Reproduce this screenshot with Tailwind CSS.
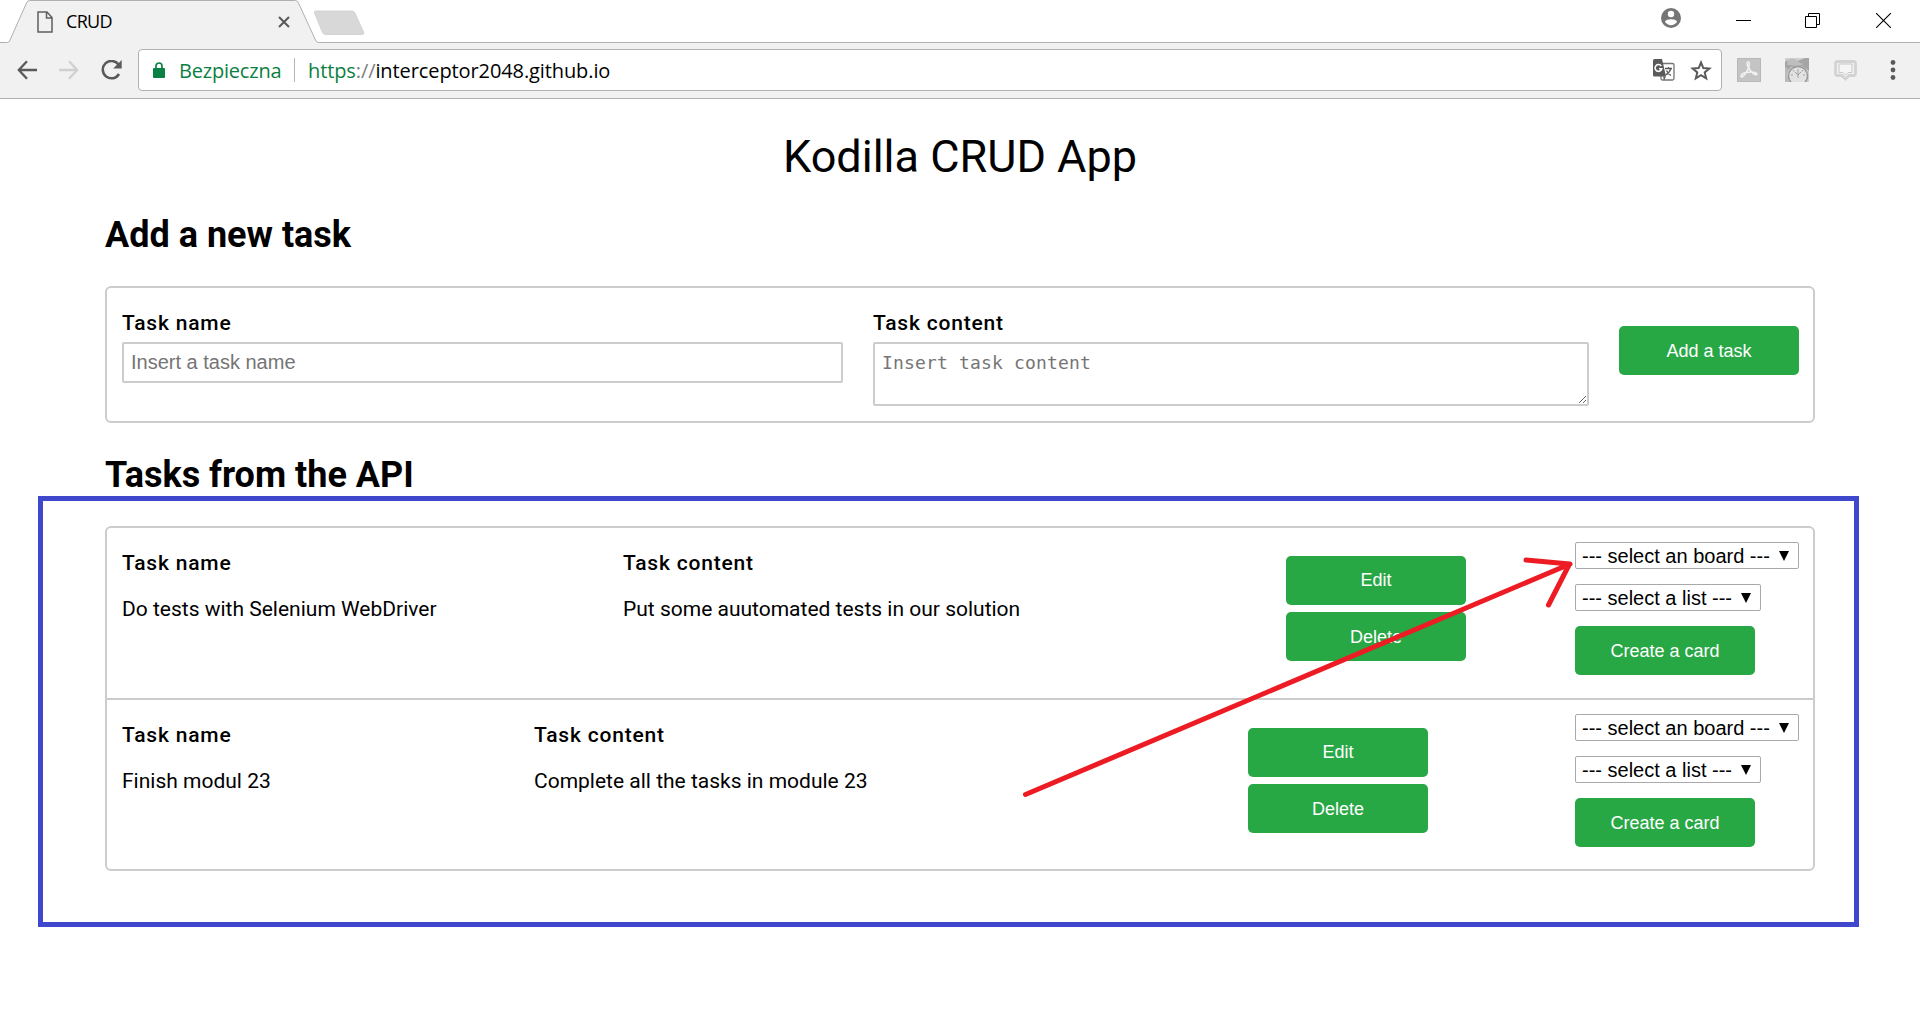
<!DOCTYPE html>
<html lang="pl">
<head>
<meta charset="utf-8">
<title>CRUD</title>
<script src="https://cdn.jsdelivr.net/npm/@tailwindcss/browser@4"></script>
</head>
<body class="relative h-[1020px] w-[1920px] overflow-hidden bg-white font-[Roboto,sans-serif] text-black">

<!-- Tab strip -->
<header class="font-['Open_Sans',sans-serif]">
  <div class="relative flex h-[43px] items-start">
    <svg class="absolute inset-0" width="1920" height="43" viewBox="0 0 1920 43" fill="none">
      <path d="M0 42.5H7.5Q9 42.5 10 40L26.500 3Q27.500 .5 29.500 .5H295.500Q297.500 .5 298.500 3L315.500 40Q316.500 42.500 318.500 42.500H1920V43H0Z" fill="#f1f1f1"/>
      <path d="M0 42.500H7.500Q9 42.500 10 40L26.500 3Q27.500 .5 29.500 .5H295.500Q297.500 .5 298.500 3L315.500 40Q316.500 42.500 318.500 42.500H1920" stroke="#b0b0b0"/>
      <path d="M316 11H352Q354 11 355 13L363.500 32Q364.500 34.500 362.500 34.500H326Q323.500 34.500 322.500 32.500L314.500 13Q313.500 11 316 11Z" fill="#d8d8d8" stroke="#cdcdcd" stroke-width=".8"/>
    </svg>
    <div class="relative ml-[37px] flex h-[43px] w-[253px] items-center">
      <svg width="16" height="22" viewBox="0 0 16 22" fill="none" stroke="#5f5f5f" stroke-width="1.500"><path d="M1 1H10L15 6.500V21H1ZM9.500 1V7H15"/></svg>
      <span class="ml-[13px] flex-1 pb-px text-[18px] leading-6 tracking-[-0.7px]">CRUD</span>
      <svg width="12" height="12" viewBox="0 0 12 12" stroke="#5a5a5a" stroke-width="2"><path d="M1 1L11 11M11 1L1 11"/></svg>
    </div>
    <div class="relative ml-auto flex h-[43px] items-start">
      <svg class="mt-2" width="20" height="20" viewBox="0 0 20 20"><circle cx="10" cy="10" r="10" fill="#757575"/><circle cx="10" cy="6" r="3.200" fill="#fff"/><path d="M4 14C4 11.800 8 11.200 10 11.200S16 11.800 16 14C14.500 16 12.500 17.200 10 17.200S5.500 16 4 14Z" fill="#fff"/></svg>
      <svg class="ml-[55px] mt-[13px]" width="15" height="15" viewBox="0 0 15 15" stroke="#000"><path d="M0 7.500H15"/></svg>
      <svg class="ml-[54px] mt-[13px]" width="15" height="15" viewBox="0 0 15 15" fill="none" stroke="#000"><path d="M.5 3.500H11.500V14.500H.5ZM3.500 3.500V.5H14.500V11.500H11.500"/></svg>
      <svg class="ml-[56px] mr-[29px] mt-[13px]" width="15" height="15" viewBox="0 0 15 15" stroke="#000" stroke-width="1.100"><path d="M0 0L15 15M15 0L0 15"/></svg>
    </div>
  </div>

  <!-- Toolbar -->
  <div class="flex h-14 items-start border-b border-[#b0b0b0] bg-[#f1f1f1] pt-[6px]">
    <div class="flex h-[41px] items-center pl-[17px]">
      <svg width="20" height="20" viewBox="0 0 20 20" fill="none" stroke="#5a5a5a" stroke-width="2.300"><path d="M20 10H2M10 1.200L1.800 10L10 18.800"/></svg>
      <svg class="ml-[22px]" width="20" height="20" viewBox="0 0 20 20" fill="none" stroke="#d0d0d0" stroke-width="2.300"><path d="M0 10H18M10 1.200L18.200 10L10 18.800"/></svg>
      <svg class="ml-[22px]" width="21" height="20" viewBox="0 0 21 20" fill="none"><path d="M17.500 4.500A8.700 8.700 0 1 0 18 14" stroke="#5a5a5a" stroke-width="2.500"/><path d="M20.700 0V8.500H12.200Z" fill="#5a5a5a"/></svg>
    </div>
    <div class="ml-4 flex h-[42px] w-[1584px] items-center rounded border border-[#b0b0b0] bg-white text-[20px]">
      <svg class="ml-[14px]" width="12" height="16" viewBox="0 0 12 16"><path d="M3 7V4a3 3 0 0 1 6 0V7" fill="none" stroke="#0b8043" stroke-width="1.700"/><rect y="6" width="12" height="10" rx="1" fill="#0b8043"/></svg>
      <span class="ml-[14px] w-[102px] pt-px tracking-[-0.2px] text-[#0b8043]">Bezpieczna</span>
      <span class="ml-[13px] h-6 w-px bg-[#b5b5b5]"></span>
      <span class="ml-[13px] pt-px tracking-[-0.1px]"><span class="text-[#0b8043]">https</span><span class="text-[#808080]">://</span>interceptor2048.github.io</span>
      <svg class="ml-auto" width="22" height="22" viewBox="0 0 22 22"><rect x="8" y="4.500" width="13" height="16.500" rx="1.500" fill="#fff" stroke="#757575" stroke-width="1.300"/><path d="M1.500 0H9L13 17.500H1.500Q0 17.500 0 16V1.500Q0 0 1.500 0Z" fill="#5a5a5a"/><path d="M10 17.500H13L11 21.500Z" fill="#5a5a5a"/><path d="M8.300 7A3.400 3.400 0 1 0 8.800 9.700H6" fill="none" stroke="#fff" stroke-width="1.600"/><path d="M12 9.500H19M15.500 8V9.500M18 9.500Q16.500 14 12.500 16M13.500 11.500Q15 15 18 16.500" stroke="#5a5a5a" stroke-width="1.300" fill="none"/></svg>
      <svg class="ml-[15px] mr-[9px]" width="22" height="21" viewBox="0 0 22 21" fill="none" stroke="#5a5a5a" stroke-width="2"><path d="M11 2.500L13.300 8.100L19.300 8.500L14.700 12.400L16.200 18.300L11 15.100L5.800 18.300L7.300 12.400L2.700 8.500L8.700 8.100Z"/></svg>
    </div>
    <div class="flex h-[42px] items-center pl-[15px]">
      <svg width="24" height="24" viewBox="0 0 24 24" fill="none"><path d="M0 0H24V24H0Z" fill="#c4c4c4"/><path d="M.5 .5H23.500V23.500H.5Z" stroke="#b8b8b8"/><path d="M10.500 4C14 3 12 10 10 13C8 17 4 21 4 18C4 15 13 13 18 14.500C22 16 19 18 16 15.500C12 12 9 5 10.500 4Z" stroke="#f3f3f3" stroke-width="1.500"/></svg>
      <svg class="ml-6" width="24" height="24" viewBox="0 0 24 24"><path d="M0 0H24V24H0Z" fill="#cfcfcf"/><path d="M0 4Q6 0 13 3L20 0H24V13L17 8L6 9L0 17Z" fill="#a5a5a5"/><path d="M3 2Q8 -1 11 2T19 6L13 8L2 7Z" fill="#bebebe"/><circle cx="13" cy="18" r="9.500" fill="#e2e2e2" stroke="#999" stroke-width="1.500"/><path d="M13 11V20M10 14L13 17L16 14M6 17H8M18 17H20M8 12L9 13.500M18 12L17 13.500" stroke="#a0a0a0" stroke-width="1" fill="none"/><path d="M0 9L4 11L2 16L4 24H0Z" fill="#bbb"/></svg>
      <svg class="ml-[25px]" width="23" height="21" viewBox="0 0 23 21" fill="none"><path d="M3.500 1.500H19.500Q21.500 1.500 21.500 3.500V13.500Q21.500 15.500 19.500 15.500H15L11.500 19L8 15.500H3.500Q1.500 15.500 1.500 13.500V3.500Q1.500 1.500 3.500 1.500Z" stroke="#d3d3d3" stroke-width="2.800"/><path d="M5 4H18V12.500H14L11.500 15L9 12.500H5Z" stroke="#c9c9c9" fill="#f5f5f5"/></svg>
      <svg class="ml-[33px]" width="6" height="20" viewBox="0 0 6 20" fill="#5a5a5a"><circle cx="3" cy="2.500" r="2.400"/><circle cx="3" cy="10" r="2.400"/><circle cx="3" cy="17.500" r="2.400"/></svg>
    </div>
  </div>
</header>

<main class="mx-[105px] pt-8 text-[21px] leading-6">
  <h1 class="text-center text-[45px] leading-[52px]">Kodilla CRUD App</h1>

  <h2 class="mt-[31px] text-[36px] font-bold leading-[42px]">Add a new task</h2>
  <form class="mt-[30px] flex h-[137px] items-start rounded-md border-2 border-[#ccc] pl-[15px] pr-[14px] pt-[23px]">
    <label class="block w-[721px]">
      <span class="block font-medium tracking-[0.8px]">Task name</span>
      <input class="mt-[7px] block h-[41px] w-full rounded-xs border-2 border-[#ccc] px-[7px] pb-px font-['Liberation_Sans',sans-serif] text-[20px] placeholder:text-[#757575]" placeholder="Insert a task name">
    </label>
    <label class="ml-[30px] block w-[716px]">
      <span class="block font-medium tracking-[0.8px]">Task content</span>
      <textarea class="mt-[7px] block h-16 w-full rounded-xs border-2 border-[#ccc] px-[7px] py-[7px] font-['DejaVu_Sans_Mono',monospace] text-[18px] leading-6 tracking-[0.160px] placeholder:text-[#757575]" placeholder="Insert task content"></textarea>
    </label>
    <button type="button" class="ml-[30px] mt-[15px] h-[49px] w-[180px] rounded-[5px] bg-[#28a745] font-['Liberation_Sans',sans-serif] text-[18px] text-white">Add a task</button>
  </form>

  <h2 class="mt-[31px] text-[36px] font-bold leading-[42px]">Tasks from the API</h2>
  <section class="mt-[30px] h-[345px] rounded-md border-2 border-[#ccc]">
    <article class="flex h-[172px] items-start border-b-2 border-[#ccc] pl-[15px] pr-[14px]">
      <div class="w-[501px] pt-[23px]">
        <h3 class="font-medium tracking-[0.8px]">Task name</h3>
        <p class="mt-[22px]">Do tests with Selenium WebDriver</p>
      </div>
      <div class="w-[663px] pt-[23px]">
        <h3 class="font-medium tracking-[0.8px]">Task content</h3>
        <p class="mt-[22px]">Put some auutomated tests in our solution</p>
      </div>
      <div class="flex w-[289px] flex-col gap-[7px] pt-7 font-['Liberation_Sans',sans-serif] text-[18px] text-white">
        <button class="h-[49px] w-[180px] rounded-[5px] bg-[#28a745] pb-0.5">Edit</button>
        <button class="h-[49px] w-[180px] rounded-[5px] bg-[#28a745]">Delete</button>
      </div>
      <div class="flex flex-col items-start gap-[15px] pt-[14px] font-['Liberation_Sans',sans-serif] text-[20px]">
        <div class="flex h-[27px] w-[224px] items-center justify-between rounded-xs border border-[#a9a9a9] pl-[6px] pr-[9px]"><span>--- select an board ---</span><svg width="10" height="10" viewBox="0 0 10 10"><path d="M0 0H10L5 10Z"/></svg></div>
        <div class="flex h-[27px] w-[186px] items-center justify-between rounded-xs border border-[#a9a9a9] pl-[6px] pr-[9px]"><span>--- select a list ---</span><svg width="10" height="10" viewBox="0 0 10 10"><path d="M0 0H10L5 10Z"/></svg></div>
        <button class="h-[49px] w-[180px] rounded-[5px] bg-[#28a745] text-[18px] text-white">Create a card</button>
      </div>
    </article>
    <article class="flex h-[169px] items-start pl-[15px] pr-[14px]">
      <div class="w-[412px] pt-[23px]">
        <h3 class="font-medium tracking-[0.8px]">Task name</h3>
        <p class="mt-[22px]">Finish modul 23</p>
      </div>
      <div class="w-[714px] pt-[23px]">
        <h3 class="font-medium tracking-[0.8px]">Task content</h3>
        <p class="mt-[22px]">Complete all the tasks in module 23</p>
      </div>
      <div class="flex w-[327px] flex-col gap-[7px] pt-7 font-['Liberation_Sans',sans-serif] text-[18px] text-white">
        <button class="h-[49px] w-[180px] rounded-[5px] bg-[#28a745] pb-0.5">Edit</button>
        <button class="h-[49px] w-[180px] rounded-[5px] bg-[#28a745]">Delete</button>
      </div>
      <div class="flex flex-col items-start gap-[15px] pt-[14px] font-['Liberation_Sans',sans-serif] text-[20px]">
        <div class="flex h-[27px] w-[224px] items-center justify-between rounded-xs border border-[#a9a9a9] pl-[6px] pr-[9px]"><span>--- select an board ---</span><svg width="10" height="10" viewBox="0 0 10 10"><path d="M0 0H10L5 10Z"/></svg></div>
        <div class="flex h-[27px] w-[186px] items-center justify-between rounded-xs border border-[#a9a9a9] pl-[6px] pr-[9px]"><span>--- select a list ---</span><svg width="10" height="10" viewBox="0 0 10 10"><path d="M0 0H10L5 10Z"/></svg></div>
        <button class="h-[49px] w-[180px] rounded-[5px] bg-[#28a745] text-[18px] text-white">Create a card</button>
      </div>
    </article>
  </section>
</main>

<!-- Annotation frame and arrow -->
<div class="pointer-events-none absolute left-[38px] top-[496px] h-[431px] w-[1821px] border-5 border-[#3f48cc]"></div>
<svg class="pointer-events-none absolute left-0 top-0" width="1920" height="1020" viewBox="0 0 1920 1020" fill="none" stroke="#ed1c24" stroke-width="5" stroke-linecap="round" stroke-linejoin="round"><path d="M1025.500 794.500L1570 564M1526 560L1569.500 564L1548.500 605"/></svg>
</body>
</html>
